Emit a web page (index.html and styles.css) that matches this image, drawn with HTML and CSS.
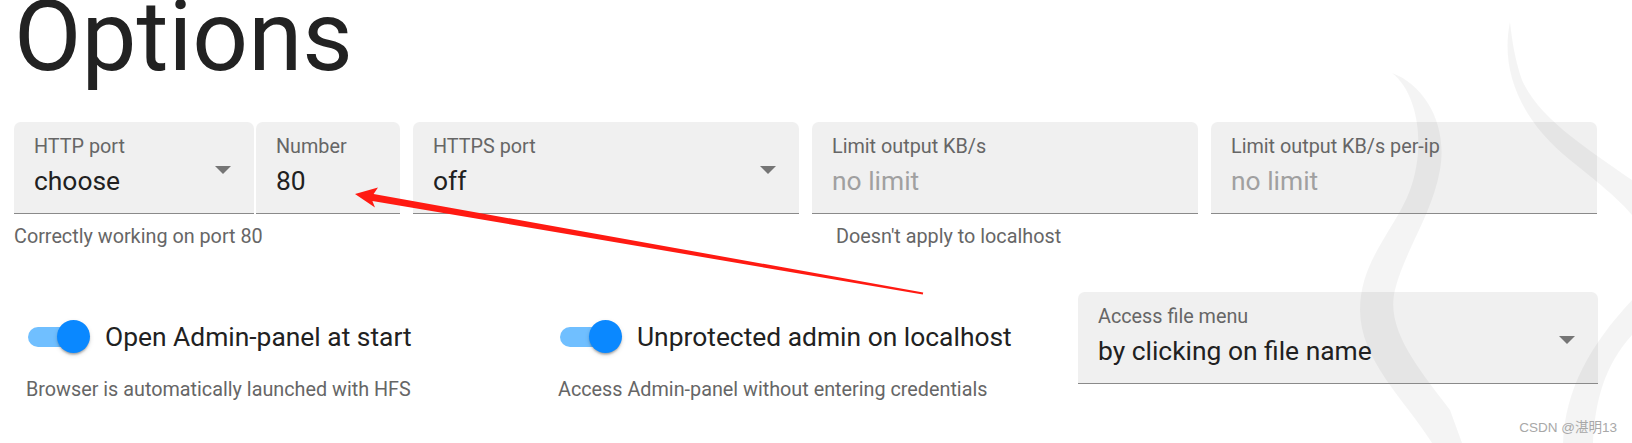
FILE: index.html
```html
<!DOCTYPE html>
<html lang="en">
<head>
<meta charset="utf-8">
<title>Options</title>
<link rel="stylesheet" href="styles.css">
</head>
<body>
<div class="page">
  <svg class="swirls" width="1632" height="443" viewBox="0 0 1632 443" aria-hidden="true">
    <path d="M1392,73 C1425,85 1448,125 1440,170 C1432,215 1405,250 1395,290 C1385,330 1420,370 1450,410 L1462,443 L1432,443 C1405,400 1360,360 1360,310 C1360,260 1395,230 1410,190 C1425,150 1420,95 1392,73 Z"/>
    <path d="M1510,22 C1500,70 1520,120 1570,160 C1595,180 1620,200 1632,215 L1632,180 C1590,150 1540,120 1522,80 C1515,60 1512,40 1510,22 Z"/>
    <path d="M1563,443 C1565,390 1590,345 1632,300 L1632,335 C1605,365 1595,400 1593,443 Z"/>
  </svg>

  <div class="content">
    <h1 class="title">Options</h1>

    <div class="row4">
      <div class="cell">
        <div class="split">
          <div class="field field-select field-port">
            <div class="label">HTTP port</div>
            <div class="value">choose</div>
            <span class="caret"></span>
          </div>
          <div class="field field-number">
            <div class="label">Number</div>
            <div class="value">80</div>
          </div>
        </div>
        <div class="helper helper-flush">Correctly working on port 80</div>
      </div>
      <div class="cell">
        <div class="field field-select">
          <div class="label">HTTPS port</div>
          <div class="value">off</div>
          <span class="caret"></span>
        </div>
      </div>
      <div class="cell">
        <div class="field">
          <div class="label">Limit output KB/s</div>
          <div class="value placeholder">no limit</div>
        </div>
        <div class="helper helper-indent">Doesn't apply to localhost</div>
      </div>
      <div class="cell">
        <div class="field">
          <div class="label">Limit output KB/s per-ip</div>
          <div class="value placeholder">no limit</div>
        </div>
      </div>
    </div>

    <div class="row3">
      <div class="cell switch-cell">
        <div class="switch-row">
          <span class="switch"><span class="track"></span><span class="thumb"></span></span>
          <span class="switch-label">Open Admin-panel at start</span>
        </div>
        <div class="helper switch-helper">Browser is automatically launched with HFS</div>
      </div>
      <div class="cell switch-cell">
        <div class="switch-row">
          <span class="switch"><span class="track"></span><span class="thumb"></span></span>
          <span class="switch-label">Unprotected admin on localhost</span>
        </div>
        <div class="helper switch-helper">Access Admin-panel without entering credentials</div>
      </div>
      <div class="cell">
        <div class="field field-select">
          <div class="label">Access file menu</div>
          <div class="value">by clicking on file name</div>
          <span class="caret"></span>
        </div>
      </div>
    </div>
  </div>

  <svg class="annot" width="1632" height="443" viewBox="0 0 1632 443" aria-hidden="true">
    <polygon points="355,194 378,187.5 373.6,194 923.2,292.5 922.8,294.5 372.4,200.9 375,207.5"/>
  </svg>

  <div class="watermark">CSDN @湛明13</div>
</div>
</body>
</html>
```

FILE: styles.css
```css
html, body {
  margin: 0;
  padding: 0;
  width: 1632px;
  height: 443px;
  overflow: hidden;
  background: #ffffff;
}

.page {
  position: relative;
  width: 1632px;
  height: 443px;
  font-family: Roboto, "Noto Sans", sans-serif;
  color: #212121;
}

.swirls {
  position: absolute;
  left: 0;
  top: 0;
  z-index: 0;
}

.swirls path {
  fill: rgba(0, 0, 0, 0.045);
}

.content {
  position: relative;
  z-index: 1;
  padding-left: 14px;
  width: 1584px;
}

.title {
  margin: 0;
  font-size: 98px;
  font-weight: 400;
  line-height: 73px;
  color: #222222;
}

.row4 {
  margin-top: 49px;
  display: grid;
  grid-template-columns: repeat(4, 386px);
  column-gap: 13px;
  align-items: start;
}

.row3 {
  margin-top: 43px;
  display: grid;
  grid-template-columns: 519px 519px 520px;
  column-gap: 13px;
  align-items: start;
}

.split {
  display: flex;
  gap: 2px;
}

.field {
  position: relative;
  box-sizing: border-box;
  height: 92px;
  padding: 13px 20px 0 20px;
  background: rgba(0, 0, 0, 0.06);
  border-top-left-radius: 6.5px;
  border-top-right-radius: 6.5px;
  border-bottom: 1px solid #8a8a8a;
}

.field-port {
  width: 240px;
}

.field-number {
  width: 144px;
}

.label {
  font-size: 19.8px;
  line-height: 24px;
  color: #666666;
  white-space: nowrap;
}

.value {
  margin-top: 6px;
  font-size: 26.4px;
  line-height: 32px;
  color: #212121;
  white-space: nowrap;
}

.value.placeholder {
  color: #a0a0a0;
}

.caret {
  position: absolute;
  right: 23px;
  top: 43.5px;
  width: 0;
  height: 0;
  border-left: 8px solid transparent;
  border-right: 8px solid transparent;
  border-top: 8px solid #757575;
}

.helper {
  font-size: 19.8px;
  line-height: 24px;
  color: #666666;
  white-space: nowrap;
}

.helper-flush {
  margin-top: 11px;
  margin-left: 0;
}

.helper-indent {
  margin-top: 11px;
  margin-left: 24px;
}

.switch-cell {
  padding-top: 24.5px;
}

.switch-row {
  display: flex;
  align-items: center;
  height: 40px;
  padding-left: 14px;
}

.switch {
  position: relative;
  width: 75px;
  height: 40px;
  flex: none;
}

.track {
  position: absolute;
  left: 0;
  top: 10px;
  width: 55px;
  height: 20px;
  border-radius: 10px;
  background: #70bfff;
}

.thumb {
  position: absolute;
  left: 28.5px;
  top: 3.5px;
  width: 33px;
  height: 33px;
  border-radius: 50%;
  background: #0a88ff;
  box-shadow: 0 3px 2px -2px rgba(0, 0, 0, 0.2), 0 2px 2px 0 rgba(0, 0, 0, 0.14), 0 2px 5px 0 rgba(0, 0, 0, 0.12);
}

.switch-label {
  margin-left: 2px;
  font-size: 26.4px;
  line-height: 40px;
  color: #212121;
  white-space: nowrap;
}

.switch-helper {
  margin-top: 21.7px;
  margin-left: 12px;
}

.annot {
  position: absolute;
  left: 0;
  top: 0;
  z-index: 2;
  pointer-events: none;
}

.annot polygon {
  fill: #ff1a12;
}

.watermark {
  position: absolute;
  right: 15px;
  top: 420px;
  z-index: 3;
  font-family: "Liberation Sans", "Noto Sans CJK SC", sans-serif;
  font-size: 13.5px;
  line-height: 16px;
  color: #a8a8a8;
  white-space: nowrap;
}
```
